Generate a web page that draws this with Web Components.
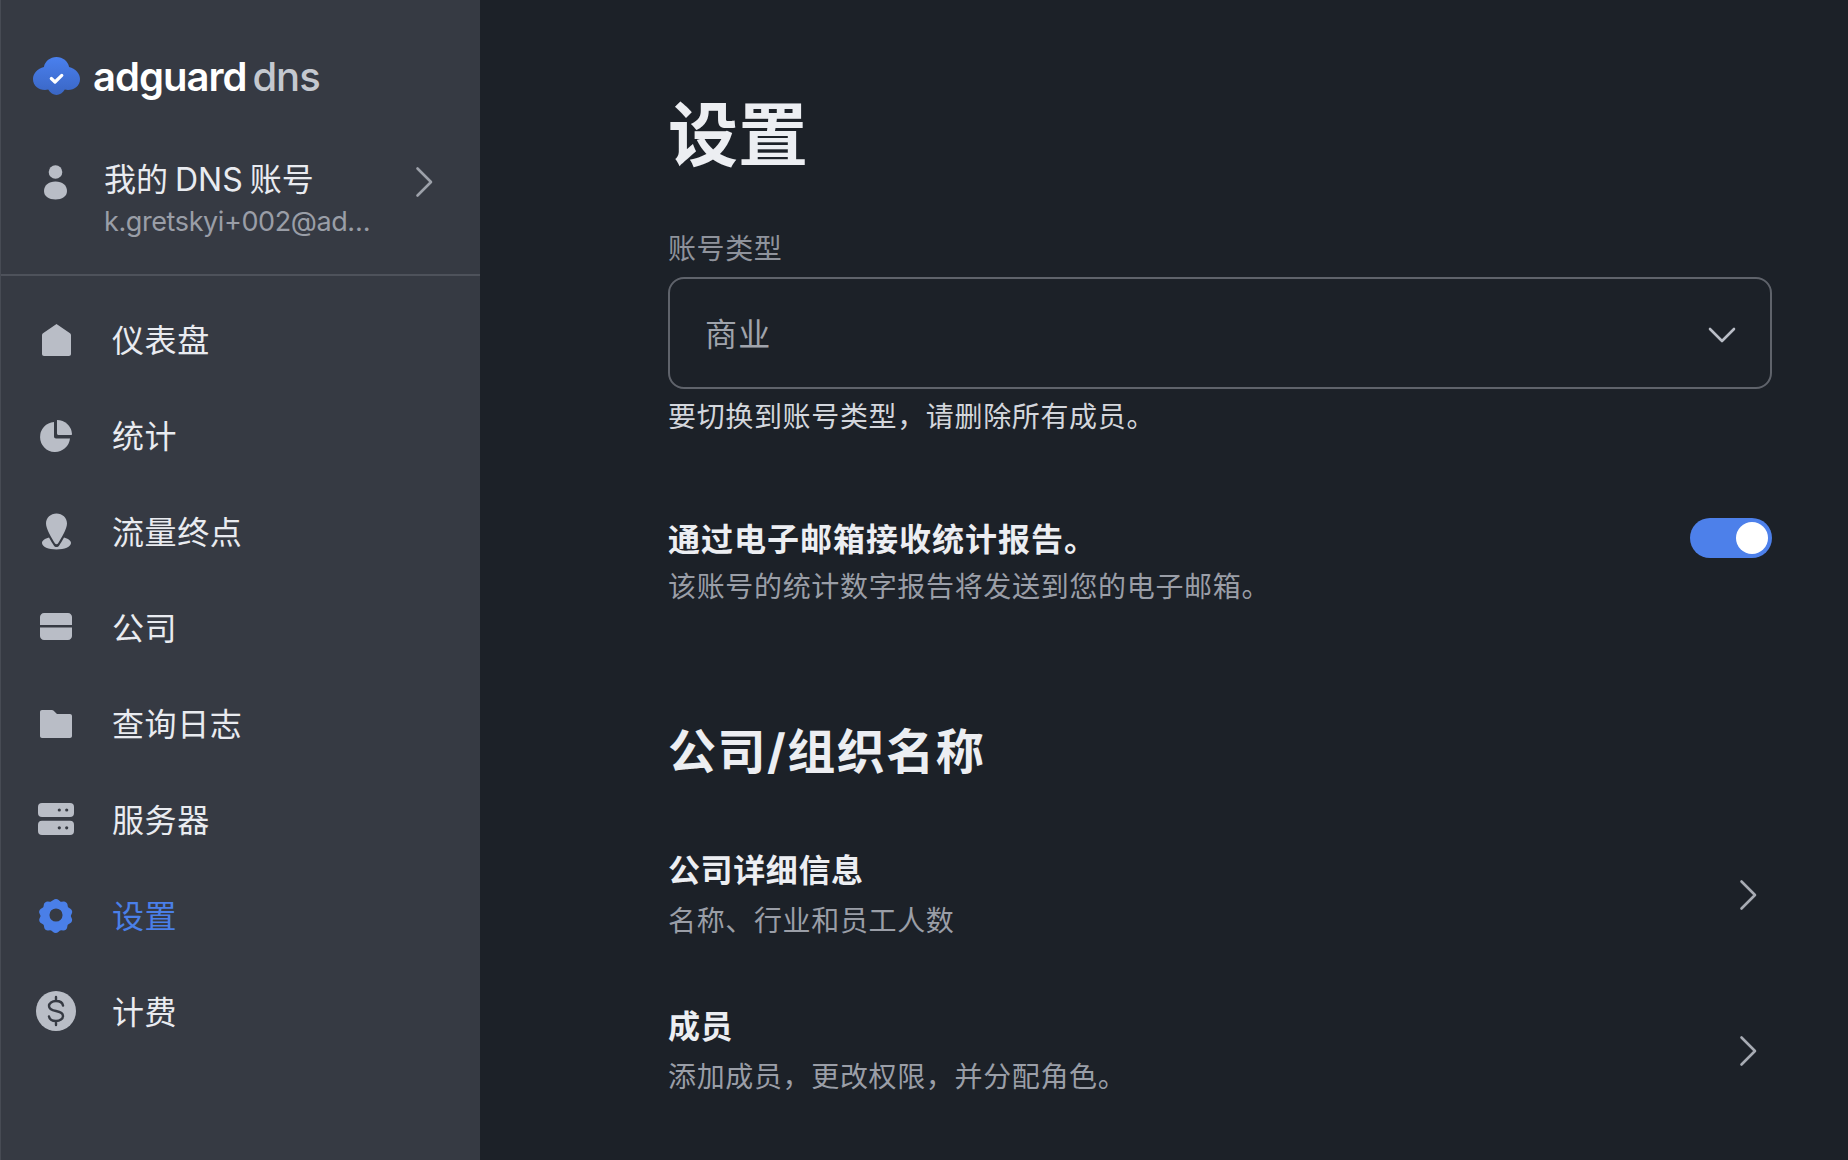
<!DOCTYPE html>
<html lang="zh-CN">
<head>
<meta charset="utf-8">
<title>AdGuard DNS</title>
<style>
  html, body { margin: 0; height: 100%; }
  body {
    background: #1c2128;
    color: #eceef2;
    font-family: Inter, "Noto Sans CJK SC", sans-serif;
    overflow: hidden;
  }
</style>
</head>
<body>
<app-shell>
  <side-bar slot="side">
    <nav-item label="仪表盘" icon="home"></nav-item>
    <nav-item label="统计" icon="pie"></nav-item>
    <nav-item label="流量终点" icon="pin"></nav-item>
    <nav-item label="公司" icon="card"></nav-item>
    <nav-item label="查询日志" icon="folder"></nav-item>
    <nav-item label="服务器" icon="server"></nav-item>
    <nav-item label="设置" icon="gear" active></nav-item>
    <nav-item label="计费" icon="dollar"></nav-item>
  </side-bar>
  <settings-page>
    <type-select label="账号类型" value="商业" help="要切换到账号类型，请删除所有成员。"></type-select>
    <toggle-row title-text="通过电子邮箱接收统计报告。" desc="该账号的统计数字报告将发送到您的电子邮箱。"></toggle-row>
    <h2-title>公司/组织名称</h2-title>
    <link-row title-text="公司详细信息" desc="名称、行业和员工人数"></link-row>
    <link-row title-text="成员" desc="添加成员，更改权限，并分配角色。"></link-row>
  </settings-page>
</app-shell>

<script>
const icons = {
  home: `<path d="M24.500 9 38 18.300c.6.400 1 1.100 1 1.900V39c0 1.100-.9 2-2 2H12c-1.100 0-2-.9-2-2V20.200c0-.8.400-1.500 1-1.900Z"/>`,
  pie: `<path d="M22 11a15 15 0 1 0 16 16.500H24c-1.100 0-2-.9-2-2Z"/><path d="M25 9a15 15 0 0 1 15 14c0 .6-.4 1-1 1H26.500c-.8 0-1.500-.7-1.500-1.500Z"/>`,
  pin: `<path d="M24.500 6.500c5.800 0 10.500 4.300 10.500 10 0 5.500-6 15-9 20-.7 1.100-2.300 1.100-3 0-3-5-9-14.500-9-20 0-5.700 4.700-10 10.500-10Z"/><path d="M17 30.500c1.700 3 3.500 6 4.800 8 1.300 2 4.100 2 5.400 0 1.300-2 3.100-5 4.800-8C36 31.500 39 33.500 39 36c0 3.700-6.500 6.500-14.500 6.500S10 39.700 10 36c0-2.500 3-4.500 7-5.500Z"/>`,
  card: `<path d="M12 10h24c2.200 0 4 1.800 4 4v8H8v-8c0-2.200 1.800-4 4-4Z"/><path d="M8 24.500h32V33c0 2.200-1.800 4-4 4H12c-2.200 0-4-1.800-4-4Z"/>`,
  folder: `<path d="M10 11h10c.6 0 1 .2 1.400.6L25 15h13c1.100 0 2 .9 2 2v20c0 1.100-.9 2-2 2H10c-1.100 0-2-.9-2-2V13c0-1.100.9-2 2-2Z"/>`,
  server: `<rect x="6" y="8" width="36" height="14" rx="4"/><rect x="6" y="25.700" width="36" height="14.300" rx="4"/><circle cx="27.300" cy="15" r="1.600" fill="#363a43"/><circle cx="34.700" cy="15" r="1.600" fill="#363a43"/><circle cx="27.300" cy="32.800" r="1.600" fill="#363a43"/><circle cx="34.700" cy="32.800" r="1.600" fill="#363a43"/>`,
  gear: `<path transform="translate(24 24) scale(.82) translate(-24 -24)" fill-rule="evenodd" d="M20.800 5.700c1.700-1.500 4.700-1.500 6.400 0l1.700 1.500c.6.500 1.300.7 2 .6l2.300-.2c2.200-.2 4.400 1.500 4.800 3.700l.4 2.200c.1.700.6 1.300 1.200 1.700l2 1.100c2 1.100 2.800 3.900 1.700 5.900l-1 2c-.3.600-.3 1.400 0 2l1 2c1.100 2-.1 4.800-2.100 5.900l-2 1.100c-.6.400-1 1-1.200 1.700l-.4 2.200c-.4 2.200-2.600 3.900-4.800 3.700l-2.300-.2c-.7-.1-1.400.1-2 .6l-1.700 1.500c-1.700 1.500-4.700 1.500-6.400 0l-1.700-1.500c-.6-.5-1.300-.7-2-.6l-2.300.2c-2.200.2-4.400-1.500-4.800-3.700l-.4-2.200c-.1-.7-.6-1.300-1.200-1.700l-2-1.100c-2-1.100-3.200-3.900-2.100-5.900l1-2c.3-.6.300-1.400 0-2l-1-2c-1.100-2-.3-4.800 1.700-5.900l2-1.100c.6-.4 1.100-1 1.200-1.700l.4-2.200c.4-2.200 2.600-3.900 4.800-3.700l2.300.2c.7.1 1.400-.1 2-.6ZM24 16a8 8 0 1 0 0 16 8 8 0 0 0 0-16Z"/>`,
  dollar: `<circle cx="24" cy="24" r="20"/><path d="M31 18.500c-.5-2.700-3.400-4.500-7-4.500-3.900 0-7 2.100-7 5 0 3.100 3 4.300 7 5 4 .7 7 1.900 7 5 0 2.900-3.100 5-7 5-3.600 0-6.500-1.800-7-4.500M24 10v4M24 34v4" fill="none" stroke="#363a43" stroke-width="2.400" stroke-linecap="round"/>`,
};

const chevron = `<svg width="20" height="32" viewBox="0 0 20 32" fill="none" stroke="currentColor" stroke-width="2.600" stroke-linecap="round" stroke-linejoin="round"><path d="M3.500 2.500 17 16 3.500 29.500"/></svg>`;

// page frame: sidebar + content
class AppShell extends HTMLElement {
  constructor() {
    super();
    this.attachShadow({ mode: "open" }).innerHTML = `
      <style>
        :host { display: flex; height: 1160px; width: 1848px; }
      </style>
      <slot name="side"></slot>
      <slot></slot>`;
  }
}

class SideBar extends HTMLElement {
  constructor() {
    super();
    this.attachShadow({ mode: "open" }).innerHTML = `
      <style>
        :host {
          display: block;
          box-sizing: border-box;
          flex: none;
          width: 480px;
          background: #363a43;
          border-left: 1px solid #474b54;
        }
        .logo {
          display: flex;
          align-items: center;
          height: 38px;
          padding: 58px 0 0 31px;
          color: #fff;
          font: 600 40px/38px Inter, sans-serif;
          letter-spacing: -1px;
        }
        .logo svg { margin-right: 12px; flex: none; }
        .logo .dns { color: #c4c8cf; font-weight: 500; margin-left: 6px; }
        .account {
          display: flex;
          align-items: center;
          height: 180px;
          box-sizing: border-box;
          padding: 0 46px 0 31px;
          border-bottom: 2px solid #4e525b;
        }
        .account .person { flex: none; width: 48px; height: 48px; color: #b9bdc6; }
        .account .txt { flex: 1; min-width: 0; margin: 30px 0 0 24px; }
        .name { font: 400 32px/44px Inter, "Noto Sans CJK SC", sans-serif; color: #e9ebf0; word-spacing: -2px; }
        .mail { font: 400 27px/40px Inter, sans-serif; letter-spacing: -.4px; color: #9a9ea7; white-space: nowrap; }
        .account .go { flex: none; color: #9da1aa; display: flex; margin-bottom: 6px; }
        .items { padding-top: 15px; }
      </style>
      <div class="logo">
        <svg width="49" height="40" viewBox="0 0 49 40">
          <defs><linearGradient id="cloud" x1="0" y1="0" x2="0" y2="1"><stop offset="0" stop-color="#4a80ee"/><stop offset="1" stop-color="#3a66c4"/></linearGradient></defs>
          <path fill="url(#cloud)" d="M24.500 0c6.300 0 11.500 4.200 12.600 9.900C43.400 11.600 48 16.300 48 22c0 6.700-5.500 11-12 11-1.100 0-2.200-.1-3.200-.4-2 3.600-5 5.400-8.300 5.400s-6.300-1.800-8.300-5.400c-1 .3-2.100.4-3.200.4C6.500 33 1 28.700 1 22c0-5.700 4.600-10.400 10.900-12.100C13 4.200 18.200 0 24.500 0Z"/>
          <path d="M19.300 21.500 23 25l6.800-6.600" fill="none" stroke="#fff" stroke-width="3.200" stroke-linecap="round" stroke-linejoin="round"/>
        </svg>
        <span>adguard</span><span class="dns">dns</span>
      </div>
      <div class="account">
        <svg class="person" viewBox="0 0 48 48" fill="currentColor"><circle cx="23.500" cy="11" r="6.800"/><path d="M23.500 20.500c7 0 11.500 4 11.500 9.500 0 5.500-5 8.500-11.500 8.500S12 35.500 12 30c0-5.500 4.500-9.500 11.500-9.500Z"/></svg>
        <div class="txt">
          <div class="name">我的 DNS 账号</div>
          <div class="mail">k.gretskyi+002@ad…</div>
        </div>
        <span class="go">${chevron}</span>
      </div>
      <div class="items"><slot></slot></div>`;
  }
}

class NavItem extends HTMLElement {
  constructor() {
    super();
    const active = this.hasAttribute("active");
    this.attachShadow({ mode: "open" }).innerHTML = `
      <style>
        :host {
          display: flex;
          align-items: center;
          height: 96px;
          padding-left: 31px;
          gap: 32px;
          color: ${active ? "#4a7fe8" : "#e9ebf0"};
          font: 400 32px/44px "Noto Sans CJK SC", sans-serif;
          letter-spacing: .6px;
        }
        svg { flex: none; fill: ${active ? "#4a7fe8" : "#b9bdc6"}; }
        span { margin-top: -3px; }
      </style>
      <svg width="48" height="48" viewBox="0 0 48 48">${icons[this.getAttribute("icon")]}</svg>
      <span>${this.getAttribute("label")}</span>`;
  }
}

class SettingsPage extends HTMLElement {
  constructor() {
    super();
    this.attachShadow({ mode: "open" }).innerHTML = `
      <style>
        :host {
          display: block;
          box-sizing: border-box;
          flex: 1;
          padding: 81px 76px 0 188px;
        }
        h1 {
          margin: 0 0 46px;
          font: 700 70px/100px "Noto Sans CJK SC", sans-serif;
          color: #eceef2;
        }
      </style>
      <h1>设置</h1>
      <slot></slot>`;
  }
}

class TypeSelect extends HTMLElement {
  constructor() {
    super();
    this.attachShadow({ mode: "open" }).innerHTML = `
      <style>
        :host { display: block; font-family: "Noto Sans CJK SC", sans-serif; }
        .label { font-size: 28px; line-height: 40px; letter-spacing: .6px; color: #8f939c; margin-bottom: 10px; }
        .box {
          box-sizing: border-box;
          display: flex;
          align-items: center;
          justify-content: space-between;
          height: 112px;
          padding: 0 35px;
          border: 2px solid #5f636b;
          border-radius: 16px;
          font-size: 32px;
          letter-spacing: 1.2px;
          color: #a0a4ac;
        }
        .box span { margin-top: -3px; }
        .box svg { margin: 4px -2px 0 0; }
        .help { font-size: 28px; line-height: 40px; letter-spacing: .65px; color: #d3d6dc; margin-top: 6px; }
      </style>
      <div class="label">${this.getAttribute("label")}</div>
      <div class="box">
        <span>${this.getAttribute("value")}</span>
        <svg width="30" height="20" viewBox="0 0 30 20" fill="none" stroke="#b9bdc6" stroke-width="2.600" stroke-linecap="round" stroke-linejoin="round"><path d="M3 4 15 16 27 4"/></svg>
      </div>
      <div class="help">${this.getAttribute("help")}</div>`;
  }
}

class ToggleRow extends HTMLElement {
  constructor() {
    super();
    this.attachShadow({ mode: "open" }).innerHTML = `
      <style>
        :host {
          display: flex;
          justify-content: space-between;
          align-items: flex-start;
          margin-top: 79px;
          font-family: "Noto Sans CJK SC", sans-serif;
        }
        .t { font-size: 32px; line-height: 46px; font-weight: 600; letter-spacing: 1px; color: #eceef2; }
        .d { font-size: 28px; line-height: 40px; letter-spacing: .67px; color: #9a9ea7; margin-top: 5px; }
        .sw {
          position: relative;
          flex: none;
          width: 82px;
          height: 40px;
          margin-top: 4px;
          border-radius: 20px;
          background: #4d80ea;
        }
        .sw::after {
          content: "";
          position: absolute;
          top: 4px;
          right: 4px;
          width: 32px;
          height: 32px;
          border-radius: 50%;
          background: #fff;
        }
      </style>
      <div>
        <div class="t">${this.getAttribute("title-text")}</div>
        <div class="d">${this.getAttribute("desc")}</div>
      </div>
      <div class="sw"></div>`;
  }
}

class H2Title extends HTMLElement {
  constructor() {
    super();
    this.attachShadow({ mode: "open" }).innerHTML = `
      <style>
        :host {
          display: block;
          margin: 113px 0 33px;
          font: 700 48px/68px Inter, "Noto Sans CJK SC", sans-serif;
          letter-spacing: 1.5px;
          color: #eceef2;
        }
      </style>
      <slot></slot>`;
  }
}

class LinkRow extends HTMLElement {
  constructor() {
    super();
    this.attachShadow({ mode: "open" }).innerHTML = `
      <style>
        :host {
          display: flex;
          align-items: center;
          justify-content: space-between;
          height: 156px;
          font-family: "Noto Sans CJK SC", sans-serif;
        }
        .txt { margin-bottom: 10px; }
        .t { font-size: 32px; line-height: 46px; font-weight: 600; letter-spacing: .6px; color: #eceef2; }
        .d { font-size: 28px; line-height: 40px; letter-spacing: .65px; color: #9a9ea7; margin-top: 8px; }
        .go { display: flex; color: #a7abb3; margin: 0 14px 4px 0; }
      </style>
      <div class="txt">
        <div class="t">${this.getAttribute("title-text")}</div>
        <div class="d">${this.getAttribute("desc")}</div>
      </div>
      <span class="go">${chevron}</span>`;
  }
}

customElements.define("app-shell", AppShell);
customElements.define("side-bar", SideBar);
customElements.define("nav-item", NavItem);
customElements.define("settings-page", SettingsPage);
customElements.define("type-select", TypeSelect);
customElements.define("toggle-row", ToggleRow);
customElements.define("h2-title", H2Title);
customElements.define("link-row", LinkRow);
</script>
</body>
</html>
